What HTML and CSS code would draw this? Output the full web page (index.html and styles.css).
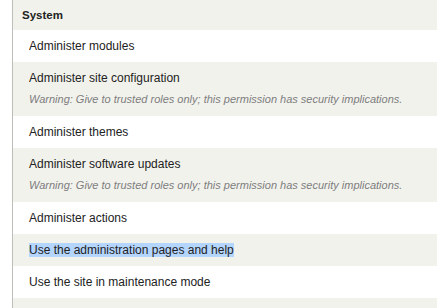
FILE: index.html
```html
<!doctype html>
<html lang="en">
<head>
  <meta charset="UTF-8">
  <title>Permissions</title>
  <link rel="stylesheet" href="styles.css">
</head>
<body>
  <div class="permissions">
    <div class="module">System</div>
    <div class="perm">
      <div class="perm-title">Administer modules</div>
    </div>
    <div class="perm odd">
      <div class="perm-title">Administer site configuration</div>
      <div class="perm-warning">Warning: Give to trusted roles only; this permission has security implications.</div>
    </div>
    <div class="perm">
      <div class="perm-title">Administer themes</div>
    </div>
    <div class="perm odd">
      <div class="perm-title">Administer software updates</div>
      <div class="perm-warning">Warning: Give to trusted roles only; this permission has security implications.</div>
    </div>
    <div class="perm">
      <div class="perm-title">Administer actions</div>
    </div>
    <div class="perm odd">
      <div class="perm-title"><span class="selected">Use the administration pages and help</span></div>
    </div>
    <div class="perm">
      <div class="perm-title">Use the site in maintenance mode</div>
    </div>
    <div class="perm odd">
      <div class="perm-title"></div>
    </div>
  </div>
</body>
</html>
```

FILE: styles.css
```css
body {
  margin: 0;
  background: #fff;
  color: #222;
  font-family: "Liberation Sans", Arial, sans-serif;
  font-size: 12px;
  overflow: hidden;
}
.permissions {
  margin-left: 12px;
  border-left: 1px solid #bebdb8;
}
.module {
  height: 30px;
  line-height: 30px;
  padding-left: 9px;
  background: #f2f2ed;
  font-size: 11.5px;
  font-weight: bold;
}
.perm {
  padding: 9px 16px 8px;
}
.perm.odd {
  background: #f2f2ed;
}
.perm-title {
  height: 15px;
  line-height: 15px;
}
.perm-warning {
  margin: 6px 0 2px;
  line-height: 14px;
  font-size: 11px;
  font-style: italic;
  color: #7d7d7d;
  white-space: nowrap;
}
.selected {
  background: #b4d5fe;
}
```
